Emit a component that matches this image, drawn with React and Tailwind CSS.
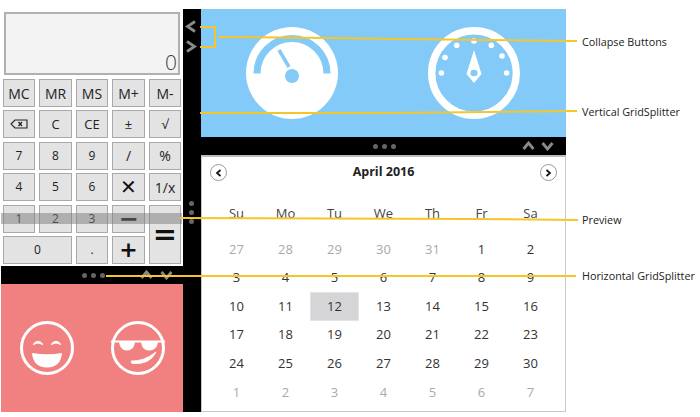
import React from 'react';

const Chevron = ({ dir }) => {
    const points = {
        left: '10,1.5 2.5,6.5 10,11.5',
        right: '2,1.5 9.5,6.5 2,11.5',
        up: '1.5,8 6.5,2 11.5,8',
        down: '1.5,2 6.5,8 11.5,2',
    }[dir];
    const vertical = dir === 'up' || dir === 'down';
    return (
        <svg width={vertical ? 13 : 12} height={vertical ? 10 : 13} viewBox={vertical ? '0 0 13 10' : '0 0 12 13'} className="block">
            <polyline points={points} fill="none" stroke="#8a8a8a" strokeWidth="2.8" />
        </svg>
    );
};

const Dot = () => <div className="w-[5px] h-[5px] rounded-full bg-[#666]" />;

const Backspace = () => (
    <svg width="18" height="10" viewBox="0 0 18 10">
        <path d="M1 5 L5 1 H17 V9 H5 Z" fill="none" stroke="#222" strokeWidth="1.1" />
        <path d="M8.5 3 L12 7 M12 3 L8.5 7" stroke="#222" strokeWidth="1.3" />
    </svg>
);

// operator glyphs on the calculator are much heavier than the digits
const Op = ({ children, className = '' }) => (
    <span className={`font-['DejaVu_Sans',sans-serif] font-bold text-[#111] ${className}`}>{children}</span>
);

const calcKeys = [
    { label: 'MC', size: 'text-[14px]' }, { label: 'MR', size: 'text-[14px]' }, { label: 'MS', size: 'text-[14px]' }, { label: 'M+', size: 'text-[14px]' }, { label: 'M-', size: 'text-[14px]' },
    { icon: <Backspace /> }, { label: 'C', size: 'text-[13px]' }, { label: 'CE', size: 'text-[13px]' }, { label: '±', size: 'text-[13px]' }, { label: '√', size: 'text-[13px]' },
    { label: '7' }, { label: '8' }, { label: '9' }, { label: '/', size: 'text-[14px]' }, { label: '%', size: 'text-[14px]' },
    { label: '4' }, { label: '5' }, { label: '6' }, { icon: <Op className="text-[20px] leading-none">✕</Op> }, { label: '1/x', size: 'text-[14px]' },
    { label: '1' }, { label: '2' }, { label: '3' }, { icon: <Op className="text-[24px] leading-none">−</Op> },
    { icon: <Op className="text-[29px] leading-none">=</Op>, cls: 'row-span-2' },
    { label: '0', cls: 'col-span-2' }, { label: '.' }, { icon: <Op className="text-[22px] leading-none">+</Op> },
];

const CalcKey = ({ k }) => (
    <div className={`flex items-center justify-center bg-[#e3e3e3] border border-[#a9a9a9] text-[#222] ${k.size || 'text-[12px]'} ${k.cls || ''}`}>
        {k.icon || k.label}
    </div>
);

const Calculator = () => (
    <div className="h-[257px] px-[2px] pt-[3px]">
        <div className="h-[63px] ml-[1px] w-[176px] bg-[#f3f3f3] border-2 border-[#b0b0b0] flex items-end justify-end pr-[1px] text-[21px] font-light leading-[22px] text-[#444]">
            0
        </div>
        <div className="mt-[4px] grid grid-cols-[32px_33px_32px_33px_32px] auto-rows-[28px] gap-x-[4px] gap-y-[3.4px]">
            {calcKeys.map((k, i) => <CalcKey key={i} k={k} />)}
        </div>
    </div>
);

const Laughing = () => (
    <svg width="58" height="58" viewBox="-29 -29 58 58">
        <circle r="25.5" fill="none" stroke="#fff" strokeWidth="3" />
        <path d="M-14 -3.5 Q-9 -10 -4 -3.5 Q-9 -6.5 -14 -3.5 Z M4 -3.5 Q9 -10 14 -3.5 Q9 -6.5 4 -3.5 Z" fill="#fff" stroke="#fff" strokeWidth="1" />
        <path d="M-15 5 Q0 7.5 15 5 Q14 19 0 19.5 Q-14 19 -15 5 Z" fill="#fff" />
    </svg>
);

const Cool = () => (
    <svg width="58" height="58" viewBox="-29 -29 58 58">
        <circle r="25.5" fill="none" stroke="#fff" strokeWidth="3" />
        <path d="M-27 -6.5 H27" stroke="#fff" strokeWidth="2.2" />
        <path d="M-19 -6 H-3 Q-4 2.5 -11 2.5 Q-18 2.5 -19 -6 Z M3 -6 H20 Q19 2.5 11 2.5 Q4 2.5 3 -6 Z" fill="#fff" />
        <path d="M-7 13 Q6 13.5 18 4 Q12 17 -6 15.5 Z" fill="#fff" stroke="#fff" strokeWidth="0.8" />
    </svg>
);

const SpeedGauge = () => (
    <svg width="92" height="92" viewBox="-46 -46 92 92">
        <circle r="46" fill="#fff" />
        <path d="M-35 0.5 A35 35 0 0 1 35 0.5" fill="none" stroke="#83caf9" strokeWidth="7" />
        <path d="M-13 -23 L-3 -6" stroke="#83caf9" strokeWidth="3.5" />
        <circle cx="0" cy="3" r="7" fill="#83caf9" />
    </svg>
);

const dialDots = [[-32.6, 0], [-29, -15.5], [-17.3, -27.7], [0, -32], [17.3, -27.7], [28, -17], [32.6, 0]];

const DialGauge = () => (
    <svg width="92" height="92" viewBox="-46 -46 92 92">
        <circle r="42.3" fill="none" stroke="#fff" strokeWidth="7.4" />
        {dialDots.map(([x, y], i) => <circle key={i} cx={x} cy={y} r="2.8" fill="#fff" />)}
        <path fillRule="evenodd" d="M0 -23 L7.5 1 L0 10 L-7.5 1 Z M0 -3.2 A3.6 3.2 0 1 0 0.01 3.2 A3.6 3.2 0 1 0 0 -3.2 Z" fill="#fff" />
    </svg>
);

const weekdays = ['Su', 'Mo', 'Tu', 'We', 'Th', 'Fr', 'Sa'];

const calendarDays = [
    27, 28, 29, 30, 31, 1, 2,
    3, 4, 5, 6, 7, 8, 9,
    10, 11, 12, 13, 14, 15, 16,
    17, 18, 19, 20, 21, 22, 23,
    24, 25, 26, 27, 28, 29, 30,
    1, 2, 3, 4, 5, 6, 7,
];

const NavButton = ({ dir }) => (
    <div className="w-[17px] h-[17px] rounded-full border border-[#999] flex items-center justify-center bg-white">
        <svg width="7" height="8" viewBox="0 0 7 8">
            <polyline points={dir === 'left' ? '5.5,1 2,4 5.5,7' : '1.5,1 5,4 1.5,7'} fill="none" stroke="#111" strokeWidth="1.7" />
        </svg>
    </div>
);

const Calendar = () => (
    <div className="h-[257px] bg-white border border-[#c8c8c8] border-t-2 border-t-[#bdbdbd]">
        <div className="h-[31px] px-[8px] flex items-center justify-between">
            <NavButton dir="left" />
            <div className="text-[12.5px] font-bold text-[#222]">April 2016</div>
            <NavButton dir="right" />
        </div>
        <div className="mt-[12px] mx-auto w-[343px] grid grid-cols-7 h-[28px] items-center text-center text-[13px] text-[#444]">
            {weekdays.map(d => <div key={d}>{d}</div>)}
        </div>
        <div className="mt-[7px] mx-auto w-[343px] grid grid-cols-7 auto-rows-[28.6px] text-center text-[13px]">
            {calendarDays.map((d, i) => {
                const muted = i < 5 || i >= 35;
                const selected = i === 16;
                return (
                    <div
                        key={i}
                        className={`flex items-center justify-center ${muted ? 'text-[#aaa]' : 'text-[#333]'} ${selected ? 'bg-[#d5d5d8] border border-[#e4e4e6]' : ''}`}
                    >
                        {d}
                    </div>
                );
            })}
        </div>
    </div>
);

const annotations = [
    { label: 'Collapse Buttons', y: 42 },
    { label: 'Vertical GridSplitter', y: 112 },
    { label: 'Preview', y: 220 },
    { label: 'Horizontal GridSplitter', y: 276 },
];

const Annotations = () => (
    <>
        <svg width="700" height="417" className="absolute left-0 top-0 pointer-events-none">
            <g fill="none" stroke="#f5c62c" strokeWidth="2">
                <polyline points="200,27 215,27 215,47 200,47" />
                <polyline points="218,37 330,38 400,39 577,41" />
                <polyline points="200,113 390,113 577,111" />
                <polyline points="180,218 470,219 578,220" />
                <polyline points="106,276 576,276" />
            </g>
        </svg>
        {annotations.map(a => (
            <div
                key={a.label}
                style={{ top: a.y - 8 }}
                className="absolute left-[582px] h-[16px] leading-[16px] text-[10.8px] text-[#222] whitespace-nowrap"
            >
                {a.label}
            </div>
        ))}
    </>
);

export default function App() {
    return (
        <div className="relative w-[700px] h-[417px] bg-white overflow-hidden font-['Open_Sans',sans-serif]">
            <div className="flex w-[565px] h-[403px] mt-[9px] ml-[1px] absolute">
                {/* left column */}
                <div className="w-[182px] flex flex-col">
                    <Calculator />
                    <div className="h-[18px] bg-black flex items-center pl-[81px]">
                        <div className="flex gap-[4px]"><Dot /><Dot /><Dot /></div>
                        <div className="flex gap-[7px] ml-[35px]"><Chevron dir="up" /><Chevron dir="down" /></div>
                    </div>
                    <div className="flex-1 bg-[#f18080] flex items-center pl-[17px] gap-[33px]">
                        <Laughing />
                        <Cool />
                    </div>
                </div>

                {/* vertical splitter */}
                <div className="w-[18px] bg-black flex flex-col items-center pt-[11px]">
                    <div className="flex flex-col gap-[7px] pr-[2px]">
                        <Chevron dir="left" />
                        <Chevron dir="right" />
                    </div>
                    <div className="flex flex-col gap-[4px] mt-[148px] pr-[2px]"><Dot /><Dot /><Dot /></div>
                </div>

                {/* right column */}
                <div className="flex-1 flex flex-col">
                    <div className="h-[128px] bg-[#83caf9] flex items-center pl-[45px] gap-[90px]">
                        <SpeedGauge />
                        <DialGauge />
                    </div>
                    <div className="h-[18px] bg-black flex items-center pl-[172px]">
                        <div className="flex gap-[4px]"><Dot /><Dot /><Dot /></div>
                        <div className="flex gap-[6px] ml-[126px]"><Chevron dir="up" /><Chevron dir="down" /></div>
                    </div>
                    <Calendar />
                </div>
            </div>

            {/* drag preview */}
            <div className="absolute left-[1px] top-[213px] w-[181px] h-[11px] bg-[#7c7c7c]/50" />
            <Annotations />
        </div>
    );
}
